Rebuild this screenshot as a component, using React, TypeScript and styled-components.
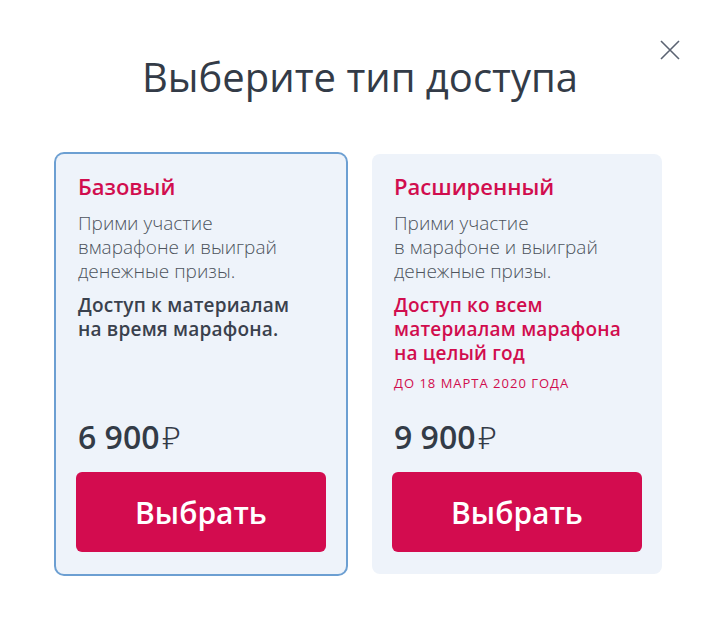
import React from 'react';
import styled, { createGlobalStyle } from 'styled-components';

const GlobalStyle = createGlobalStyle`
  html, body {
    margin: 0;
    padding: 0;
    background: #ffffff;
  }
  body {
    font-family: "Open Sans", "Noto Sans", sans-serif;
    -webkit-font-smoothing: antialiased;
  }
`;

const Modal = styled.div`
  position: relative;
  width: 720px;
  height: 640px;
  box-sizing: border-box;
  padding-top: 51px;
`;

const CloseButton = styled.button`
  position: absolute;
  top: 38px;
  right: 38px;
  width: 24px;
  height: 24px;
  padding: 0;
  border: none;
  background: none;
  cursor: pointer;
  display: flex;
  align-items: center;
  justify-content: center;
`;

const Title = styled.h1`
  margin: 0 0 51px;
  text-align: center;
  font-size: 40px;
  line-height: 52px;
  font-weight: 400;
  color: #333b47;
`;

const Plans = styled.div`
  display: flex;
  align-items: flex-start;
  gap: 26px;
  padding-left: 56px;
`;

const Card = styled.div<{ $active?: boolean }>`
  width: 290px;
  height: 420px;
  box-sizing: border-box;
  padding: 18px 20px 22px;
  display: flex;
  flex-direction: column;
  border-radius: 8px;
  background: #eef3fa;
  box-shadow: ${(p) => (p.$active ? '0 0 0 2px #6c9fd2' : 'none')};
`;

const PlanName = styled.h2`
  margin: 0 0 11px;
  padding-left: 2px;
  font-size: 22px;
  line-height: 28px;
  font-weight: 600;
  color: #d10d4e;
`;

const Description = styled.p`
  margin: 0 0 10px;
  padding-left: 2px;
  font-size: 19px;
  line-height: 24px;
  font-weight: 300;
  color: #4d535d;
`;

const Access = styled.p<{ $accent?: boolean }>`
  margin: 0;
  padding-left: 2px;
  font-size: 19px;
  line-height: 24px;
  font-weight: 600;
  letter-spacing: 0.2px;
  color: ${(p) => (p.$accent ? '#d10d4e' : '#3a414d')};
`;

const Deadline = styled.div`
  margin-top: 9px;
  padding-left: 2px;
  font-size: 13px;
  line-height: 18px;
  letter-spacing: 1px;
  text-transform: uppercase;
  color: #d10d4e;
`;

const Price = styled.div`
  margin-top: auto;
  margin-bottom: 15px;
  padding-left: 2px;
  display: flex;
  align-items: baseline;
  gap: 3px;
  font-size: 32px;
  line-height: 40px;
  font-weight: 600;
  color: #333b47;
`;

const Currency = styled.span`
  font-weight: 300;
`;

const SelectButton = styled.button`
  width: 250px;
  height: 80px;
  border: none;
  border-radius: 6px;
  background: #d30c4f;
  color: #ffffff;
  font-family: inherit;
  font-size: 30px;
  font-weight: 600;
  cursor: pointer;
`;

const CloseIcon = () => (
  <svg width="20" height="20" viewBox="0 0 20 20" fill="none">
    <path d="M1 1L19 19M19 1L1 19" stroke="#5b6372" strokeWidth="1.6" />
  </svg>
);

export default function App() {
  return (
    <>
      <GlobalStyle />
      <Modal>
        <CloseButton aria-label="Закрыть">
          <CloseIcon />
        </CloseButton>
        <Title>Выберите тип доступа</Title>
        <Plans>
          <Card $active>
            <PlanName>Базовый</PlanName>
            <Description>
              Прими участие
              <br />
              вмарафоне и выиграй
              <br />
              денежные призы.
            </Description>
            <Access>
              Доступ к материалам
              <br />
              на время марафона.
            </Access>
            <Price>
              6 900<Currency>₽</Currency>
            </Price>
            <SelectButton>Выбрать</SelectButton>
          </Card>
          <Card>
            <PlanName>Расширенный</PlanName>
            <Description>
              Прими участие
              <br />
              в марафоне и выиграй
              <br />
              денежные призы.
            </Description>
            <Access $accent>
              Доступ ко всем
              <br />
              материалам марафона
              <br />
              на целый год
            </Access>
            <Deadline>До 18 марта 2020 года</Deadline>
            <Price>
              9 900<Currency>₽</Currency>
            </Price>
            <SelectButton>Выбрать</SelectButton>
          </Card>
        </Plans>
      </Modal>
    </>
  );
}
